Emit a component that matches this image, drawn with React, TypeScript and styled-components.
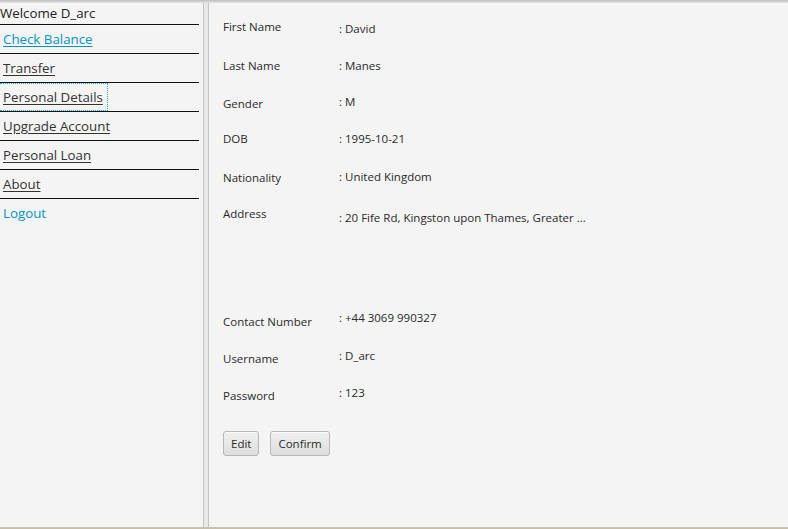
import React from "react";
import styled, { createGlobalStyle } from "styled-components";

const Global = createGlobalStyle`
  html, body { margin: 0; padding: 0; background: #f4f4f4; }
  body { font-family: "Open Sans", "Noto Sans", sans-serif; color: #333; }
`;

const Window = styled.div`
  width: 788px;
  height: 529px;
  display: flex;
  flex-direction: column;
  background: #f4f4f4;
  overflow: hidden;
`;

const TopEdge = styled.div`
  height: 3px;
  flex: none;
  background: linear-gradient(#bdbdbd, #d6d6d6 60%, #e6e6e6);
`;

const Main = styled.div`
  flex: 1;
  display: flex;
  min-height: 0;
`;

const BottomEdge = styled.div`
  height: 2px;
  flex: none;
  border-top: 1px solid #c2c2c2;
  background: #cbbf9f;
  box-sizing: border-box;
`;

const Sidebar = styled.nav`
  width: 203px;
  flex: none;
  display: flex;
  flex-direction: column;
`;

const Welcome = styled.div`
  height: 21px;
  width: 199px;
  border-bottom: 1px solid #111;
  font-size: 13.3px;
  line-height: 21px;
  color: #222;
  white-space: nowrap;
`;

const NavRow = styled.div<{ $last?: boolean }>`
  height: 28px;
  width: 199px;
  display: flex;
  align-items: center;
  border-bottom: ${(p) => (p.$last ? "none" : "1px solid #111")};
`;

const NavLink = styled.a<{ $accent?: boolean; $plain?: boolean; $focused?: boolean }>`
  font-size: 13.3px;
  color: ${(p) => (p.$accent ? "#0096c9" : "#333")};
  text-decoration: ${(p) => (p.$plain ? "none" : "underline")};
  text-underline-offset: 2px;
  padding: 0 4px 0 3px;
  height: 28px;
  box-sizing: border-box;
  border: 1px dotted ${(p) => (p.$focused ? "#1aa3d6" : "transparent")};
  border-left: none;
  line-height: 26px;
  cursor: pointer;
  white-space: nowrap;
`;

const Divider = styled.div`
  width: 6px;
  flex: none;
  box-sizing: border-box;
  border-left: 1px solid #c4c4c4;
  border-right: 1px solid #c4c4c4;
  background: #e9e9e9;
`;

const Content = styled.section`
  flex: 1;
  padding: 16px 0 0 14px;
  display: flex;
  flex-direction: column;
`;

const Field = styled.div<{ $h?: number }>`
  display: grid;
  grid-template-columns: 116px 1fr;
  height: ${(p) => p.$h ?? 37}px;
  font-size: 11.5px;
  line-height: 18px;
`;

const Label = styled.div<{ $dy?: number }>`
  color: #2a2a2a;
  margin-top: ${(p) => p.$dy ?? 0}px;
  white-space: nowrap;
`;

const Value = styled.div<{ $dy?: number }>`
  color: #2a2a2a;
  margin-top: ${(p) => p.$dy ?? 0}px;
  white-space: nowrap;
`;

const Buttons = styled.div`
  display: flex;
  gap: 11px;
  margin-top: 9px;
`;

const Button = styled.button`
  height: 25px;
  padding: 0 7px;
  font-family: inherit;
  font-size: 11.5px;
  color: #2a2a2a;
  background: linear-gradient(#f0f0f0, #dedede);
  border: 1px solid #b8b8b8;
  border-radius: 3px;
  box-shadow: inset 0 1px 0 #fafafa;
`;

const fields: { label: string; value: string; h?: number; ldy?: number; vdy?: number }[] = [
  { label: "First Name", value: ": David", ldy: -1, vdy: 1 },
  { label: "Last Name", value: ": Manes", ldy: 1, vdy: 1 },
  { label: "Gender", value: ": M", ldy: 2, vdy: 0 },
  { label: "DOB", value: ": 1995-10-21", ldy: 0, vdy: 0 },
  { label: "Nationality", value: ": United Kingdom", ldy: 2, vdy: 1 },
  { label: "Address", value: ": 20 Fife Rd, Kingston upon Thames, Greater ...", h: 107, ldy: 1, vdy: 5 },
  { label: "Contact Number", value: ": +44 3069 990327", ldy: 2, vdy: -2 },
  { label: "Username", value: ": D_arc", ldy: 2, vdy: -1 },
  { label: "Password", value: ": 123", ldy: 2, vdy: -1 },
];

export default function App() {
  return (
    <Window>
      <Global />
      <TopEdge />
      <Main>
        <Sidebar>
          <Welcome>Welcome D_arc</Welcome>
          <NavRow><NavLink $accent>Check Balance</NavLink></NavRow>
          <NavRow><NavLink>Transfer</NavLink></NavRow>
          <NavRow><NavLink $focused>Personal Details</NavLink></NavRow>
          <NavRow><NavLink>Upgrade Account</NavLink></NavRow>
          <NavRow><NavLink>Personal Loan</NavLink></NavRow>
          <NavRow><NavLink>About</NavLink></NavRow>
          <NavRow $last><NavLink $accent $plain>Logout</NavLink></NavRow>
        </Sidebar>
        <Divider />
        <Content>
          {fields.map((f) => (
            <Field key={f.label} $h={f.h}>
              <Label $dy={f.ldy}>{f.label}</Label>
              <Value $dy={f.vdy}>{f.value}</Value>
            </Field>
          ))}
          <Buttons>
            <Button>Edit</Button>
            <Button>Confirm</Button>
          </Buttons>
        </Content>
      </Main>
      <BottomEdge />
    </Window>
  );
}
